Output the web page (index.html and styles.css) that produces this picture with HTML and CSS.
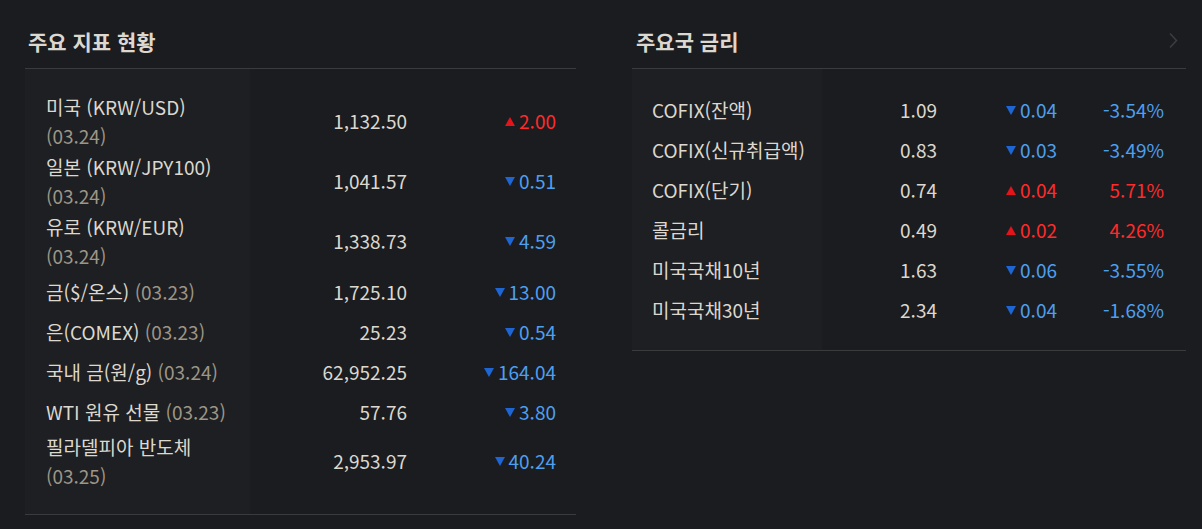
FILE: index.html
```html
<!DOCTYPE html>
<html lang="ko">
<head>
<meta charset="utf-8">
<link rel="stylesheet" href="styles.css">
</head>
<body>
<div class="page">
  <section class="panel panel-left">
    <header class="panel-head"><h2>주요 지표 현황</h2></header>
    <div class="panel-body body-left">
      <table class="grid grid-left">
        <colgroup><col class="c-name-l"><col class="c-val-l"><col class="c-chg-l"></colgroup>
        <tbody>
          <tr class="r2"><td class="name">미국 (KRW/USD)<br><span class="date">(03.24)</span></td><td class="val">1,132.50</td><td class="chg up"><i class="tri"></i>2.00</td></tr>
          <tr class="r2"><td class="name">일본 (KRW/JPY100)<br><span class="date">(03.24)</span></td><td class="val">1,041.57</td><td class="chg down"><i class="tri"></i>0.51</td></tr>
          <tr class="r2"><td class="name">유로 (KRW/EUR)<br><span class="date">(03.24)</span></td><td class="val">1,338.73</td><td class="chg down"><i class="tri"></i>4.59</td></tr>
          <tr class="r1"><td class="name">금($/온스) <span class="date">(03.23)</span></td><td class="val">1,725.10</td><td class="chg down"><i class="tri"></i>13.00</td></tr>
          <tr class="r1"><td class="name">은(COMEX) <span class="date">(03.23)</span></td><td class="val">25.23</td><td class="chg down"><i class="tri"></i>0.54</td></tr>
          <tr class="r1"><td class="name">국내 금(원/g) <span class="date">(03.24)</span></td><td class="val">62,952.25</td><td class="chg down"><i class="tri"></i>164.04</td></tr>
          <tr class="r1"><td class="name">WTI 원유 선물 <span class="date">(03.23)</span></td><td class="val">57.76</td><td class="chg down"><i class="tri"></i>3.80</td></tr>
          <tr class="r2"><td class="name">필라델피아 반도체<br><span class="date">(03.25)</span></td><td class="val">2,953.97</td><td class="chg down"><i class="tri"></i>40.24</td></tr>
        </tbody>
      </table>
    </div>
  </section>
  <section class="panel panel-right">
    <header class="panel-head"><h2>주요국 금리</h2>
      <svg class="chev" width="10" height="17" viewBox="0 0 10 17"><path d="M2 1.5 L8.5 8.5 L2 15.5" fill="none" stroke="#3b3c3e" stroke-width="1.6"/></svg>
    </header>
    <div class="panel-body body-right">
      <table class="grid grid-right">
        <colgroup><col class="c-name-r"><col class="c-val-r"><col class="c-chg-r"><col class="c-pct-r"></colgroup>
        <tbody>
          <tr class="r1"><td class="name">COFIX(잔액)</td><td class="val">1.09</td><td class="chg down"><i class="tri"></i>0.04</td><td class="pct down">-3.54%</td></tr>
          <tr class="r1"><td class="name">COFIX(신규취급액)</td><td class="val">0.83</td><td class="chg down"><i class="tri"></i>0.03</td><td class="pct down">-3.49%</td></tr>
          <tr class="r1"><td class="name">COFIX(단기)</td><td class="val">0.74</td><td class="chg up"><i class="tri"></i>0.04</td><td class="pct up">5.71%</td></tr>
          <tr class="r1"><td class="name">콜금리</td><td class="val">0.49</td><td class="chg up"><i class="tri"></i>0.02</td><td class="pct up">4.26%</td></tr>
          <tr class="r1"><td class="name">미국국채10년</td><td class="val">1.63</td><td class="chg down"><i class="tri"></i>0.06</td><td class="pct down">-3.55%</td></tr>
          <tr class="r1"><td class="name">미국국채30년</td><td class="val">2.34</td><td class="chg down"><i class="tri"></i>0.04</td><td class="pct down">-1.68%</td></tr>
        </tbody>
      </table>
    </div>
  </section>
</div>
</body>
</html>
```
FILE: styles.css
```css
html, body {
  margin: 0;
  padding: 0;
  background: #1b1c1f;
}
body {
  font-family: "Noto Sans CJK KR", "Noto Sans", sans-serif;
  color: #dcd8cf;
  width: 1202px;
  height: 529px;
  overflow: hidden;
}
.page {
  display: flex;
  align-items: flex-start;
  gap: 56px;
  padding-left: 25px;
}
.panel-left { width: 551px; border-bottom: 1px solid #3a3b3d; }
.panel-right { width: 554px; border-bottom: 1px solid #3a3b3d; }
.panel-head {
  height: 69px;
  border-bottom: 1px solid #3a3b3d;
  display: flex;
  align-items: center;
  justify-content: space-between;
  box-sizing: border-box;
  padding-top: 14px;
}
.panel-head h2 {
  margin: 0;
  font-size: 21px;
  font-weight: 700;
  color: #dcd8cf;
}
.panel-left .panel-head h2 { padding-left: 3px; }
.panel-right .panel-head h2 { padding-left: 4px; }
.chev { margin-right: 8px; margin-top: -1px; }
.body-left {
  padding: 21px 0 24px;
  background: linear-gradient(to right, #1e1f22 225px, transparent 225px);
}
.body-right {
  padding: 20px 0 21px;
  background: linear-gradient(to right, #1e1f22 190px, transparent 190px);
}
.grid {
  border-collapse: collapse;
  table-layout: fixed;
  width: 100%;
  font-size: 19px;
}
.c-name-l { width: 225px; }
.c-val-l { width: 157px; }
.c-name-r { width: 190px; }
.c-val-r { width: 115px; }
.c-chg-r { width: 120px; }
td {
  padding: 0;
  white-space: nowrap;
  vertical-align: middle;
}
tr.r1 { height: 40px; }
tr.r2 { height: 60px; }
tr.r1 td { padding-top: 3px; }
td.name {
  padding-left: 21px;
  line-height: 30px;
}
tr.r2 td.name {
  vertical-align: top;
  padding-top: 3px;
  line-height: 28.5px;
}
.grid-right td.name { padding-left: 20px; }
.grid-right tr.r1 td { padding-top: 1px; }
.date { color: #9d9687; }
td.val, td.chg, td.pct { text-align: right; }
.grid-left td.chg { padding-right: 20px; }
td.pct { padding-right: 22px; }
.up { color: #ff2b2b; }
.down { color: #4d9ff0; }
.tri {
  display: inline-block;
  width: 0;
  height: 0;
  border-left: 5.5px solid transparent;
  border-right: 5.5px solid transparent;
  margin-right: 4px;
  vertical-align: 3px;
}
.up .tri { border-bottom: 9px solid #e3141a; }
.down .tri { border-top: 9px solid #1e66d3; }
```
